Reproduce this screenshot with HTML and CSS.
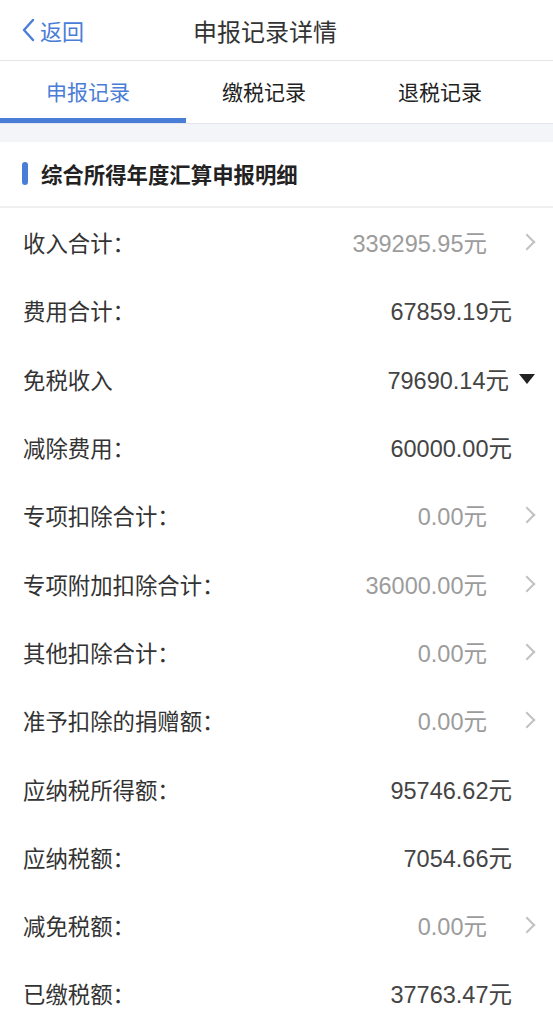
FILE: index.html
```html
<!DOCTYPE html>
<html lang="zh-CN">
<head>
<meta charset="utf-8">
<title>申报记录详情</title>
<link rel="stylesheet" href="styles.css">
</head>
<body>
<div class="page">
  <header class="navbar">
    <div class="back">
      <svg class="back-icon" width="14" height="24" viewBox="0 0 14 24"><path d="M12 2 L3 12 L12 22" fill="none" stroke="#4a7dd6" stroke-width="2.4" stroke-linecap="round" stroke-linejoin="round"/></svg>
      <span>返回</span>
    </div>
    <div class="nav-title">申报记录详情</div>
  </header>
  <nav class="tabs">
    <div class="tab active">申报记录</div>
    <div class="tab">缴税记录</div>
    <div class="tab">退税记录</div>
  </nav>
  <div class="gap"></div>
  <section class="card">
    <div class="section-head">
      <span class="bar"></span>
      <span class="section-title">综合所得年度汇算申报明细</span>
    </div>
    <div class="rows">
      <div class="row"><span class="label">收入合计：</span><span class="value muted">339295.95元</span><span class="chev"></span></div>
      <div class="row"><span class="label">费用合计：</span><span class="value">67859.19元</span><span class="none"></span></div>
      <div class="row"><span class="label">免税收入</span><span class="value">79690.14元</span><span class="tri"></span></div>
      <div class="row"><span class="label">减除费用：</span><span class="value">60000.00元</span><span class="none"></span></div>
      <div class="row"><span class="label">专项扣除合计：</span><span class="value muted">0.00元</span><span class="chev"></span></div>
      <div class="row"><span class="label">专项附加扣除合计：</span><span class="value muted">36000.00元</span><span class="chev"></span></div>
      <div class="row"><span class="label">其他扣除合计：</span><span class="value muted">0.00元</span><span class="chev"></span></div>
      <div class="row"><span class="label">准予扣除的捐赠额：</span><span class="value muted">0.00元</span><span class="chev"></span></div>
      <div class="row"><span class="label">应纳税所得额：</span><span class="value">95746.62元</span><span class="none"></span></div>
      <div class="row"><span class="label">应纳税额：</span><span class="value">7054.66元</span><span class="none"></span></div>
      <div class="row"><span class="label">减免税额：</span><span class="value muted">0.00元</span><span class="chev"></span></div>
      <div class="row"><span class="label">已缴税额：</span><span class="value">37763.47元</span><span class="none"></span></div>
    </div>
  </section>
</div>
</body>
</html>
```

FILE: styles.css
```css
* { box-sizing: border-box; }
html, body {
  margin: 0;
  padding: 0;
  background: #ffffff;
}
body {
  font-family: "Liberation Sans", "Noto Sans CJK SC", sans-serif;
  color: #333333;
  width: 553px;
  height: 1024px;
  overflow: hidden;
}
.page { width: 553px; }

.navbar {
  height: 61px;
  display: flex;
  align-items: center;
  position: relative;
  border-bottom: 1px solid #e6e6e6;
  background: #fff;
}
.back {
  display: flex;
  align-items: center;
  gap: 5px;
  padding-left: 21px;
  color: #4a7dd6;
  font-size: 22px;
  font-family: "Noto Sans CJK SC", sans-serif;
  width: 140px;
}
.back-icon { display: block; }
.nav-title {
  flex: 1;
  padding-left: 53px;
  font-size: 24px;
  color: #333;
  font-family: "Noto Sans CJK SC", sans-serif;
}

.tabs {
  height: 63px;
  display: grid;
  grid-template-columns: 176px 176px 176px;
  border-bottom: 1px solid #e3e6ec;
  background: #fff;
}
.tab {
  position: relative;
  display: flex;
  align-items: center;
  justify-content: center;
  font-size: 21px;
  color: #222;
  font-family: "Noto Sans CJK SC", sans-serif;
  padding-bottom: 2px;
}
.tab.active { color: #4a7dd6; }
.tab.active::after {
  content: "";
  position: absolute;
  left: 0;
  bottom: 0;
  width: 186px;
  height: 5px;
  background: #4a7dd6;
}

.gap {
  height: 18px;
  background: #f3f5f9;
}

.section-head {
  height: 66px;
  display: flex;
  align-items: center;
  gap: 13px;
  padding-left: 22px;
  border-bottom: 2px solid #efefef;
  padding-bottom: 2px;
}
.bar {
  width: 6px;
  height: 23px;
  border-radius: 3px;
  background: #4a7dd6;
}
.section-title {
  font-size: 21.4px;
  font-weight: bold;
  color: #222;
  font-family: "Noto Sans CJK SC", sans-serif;
}

.row {
  height: 68.3px;
  display: flex;
  align-items: center;
  padding-left: 23px;
  padding-right: 16px;
}
.label {
  flex: 1;
  font-size: 22.4px;
  color: #333;
  font-family: "Noto Sans CJK SC", sans-serif;
}
.value {
  font-size: 23.5px;
  color: #444;
}
.value.muted { color: #9c9c9c; }
.chev, .none, .tri {
  height: 20px;
  position: relative;
  display: block;
}
.none { width: 25px; }
.chev { width: 50px; }
.chev::before {
  content: "";
  position: absolute;
  left: 34px;
  top: 4px;
  width: 10px;
  height: 10px;
  border-top: 2px solid #c2c2c2;
  border-right: 2px solid #c2c2c2;
  transform: rotate(45deg);
}
.tri { width: 28px; }
.tri::before {
  content: "";
  position: absolute;
  left: 10px;
  top: 5px;
  width: 0;
  height: 0;
  border-left: 8.5px solid transparent;
  border-right: 8.5px solid transparent;
  border-top: 10px solid #222;
}
```
